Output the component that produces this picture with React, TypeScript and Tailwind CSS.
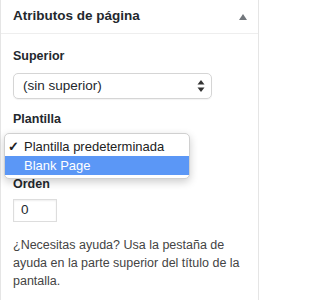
const font = { fontFamily: '"Liberation Sans", Arial, sans-serif' };

const CHECK = "\u2713";

function UpDown() {
  return (
    <svg width="8" height="14" viewBox="0 0 8 14" className="text-[#333]">
      <path d="M4 1 L7.5 5.5 H0.5 Z" fill="currentColor" />
      <path d="M4 13 L7.5 8.5 H0.5 Z" fill="currentColor" />
    </svg>
  );
}

function Option({ label, checked, active }: { label: string; checked?: boolean; active?: boolean }) {
  return (
    <li
      className={
        active
          ? "flex h-[19px] items-center gap-[5px] bg-[#5b97f6] pl-[3px] text-white"
          : "flex h-[19px] items-center gap-[5px] pl-[3px] text-[#222]"
      }
    >
      <span className={checked ? "min-w-[9px] text-[13px] font-bold" : "invisible min-w-[9px] text-[13px] font-bold"}>
        {CHECK}
      </span>
      <span className="whitespace-nowrap">{label}</span>
    </li>
  );
}

export default function App() {
  return (
    <div
      className="relative h-[300px] w-[259px] border-x border-[#e5e5e5] bg-white text-[#23282d]"
      style={font}
    >
      <div className="flex h-[34px] items-center justify-between border-b border-[#eeeeee] pl-3 pr-[11px]">
        <h2 className="text-[13.5px] font-bold">Atributos de página</h2>
        <svg width="8" height="6" viewBox="0 0 8 6">
          <path d="M4 0 L8 6 H0 Z" fill="#72777c" />
        </svg>
      </div>

      <div className="px-3 pt-[13px]">
        <p className="text-[12.5px] font-bold leading-[18px]">Superior</p>
        <div className="mt-[8px] flex h-[26px] w-[199px] items-center justify-between rounded-[5px] border border-[#d5d5d5] pl-[9px] pr-[6px] text-[13.5px] shadow-[0_1px_1px_rgba(0,0,0,0.05)]">
          <span>(sin superior)</span>
          <UpDown />
        </div>

        <p className="mt-[11px] text-[12.5px] font-bold leading-[18px]">Plantilla</p>
        <div className="mt-[8px] h-[26px] w-[199px]" />

        <p className="mt-[13px] text-[12.5px] font-bold leading-[18px]">Orden</p>
        <div className="mt-[6px] flex h-[23px] w-[44px] items-center border border-[#dddddd] pl-[7px] text-[13.5px] shadow-[inset_0_1px_2px_rgba(0,0,0,0.07)]">
          0
        </div>

        <p className="mt-[14px] text-[12.5px] leading-[18px] text-[#444]">
          ¿Necesitas ayuda? Usa la pestaña de ayuda en la parte superior del título de la pantalla.
        </p>
      </div>

      <ul className="absolute left-[3px] top-[133px] w-[186px] rounded-[5px] border border-[#d0d0d0] bg-white py-[3px] text-[13px] shadow-[0_3px_8px_rgba(0,0,0,0.2)]">
        <Option label="Plantilla predeterminada" checked />
        <Option label="Blank Page" active />
      </ul>
    </div>
  );
}
